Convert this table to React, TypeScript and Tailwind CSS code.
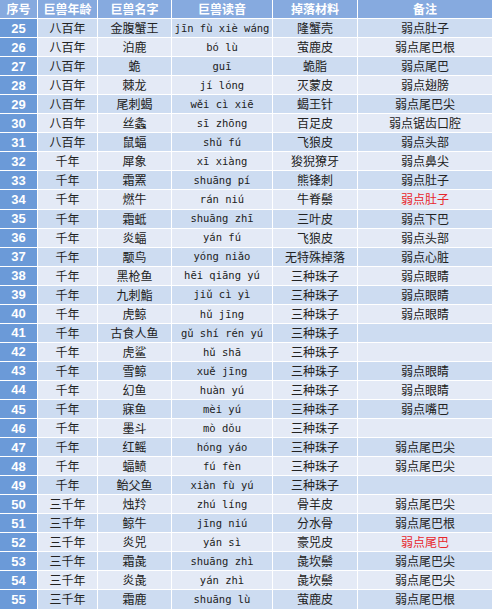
const rows: [number, string, string, string, string, string, boolean?][] = [
  [25, "八百年", "金腹蟹王", "jīn fù xiè wáng", "隆蟹壳", "弱点肚子"],
  [26, "八百年", "泊鹿", "bó lù", "萤鹿皮", "弱点尾巴根"],
  [27, "八百年", "蛫", "guī", "蛫脂", "弱点尾巴"],
  [28, "八百年", "棘龙", "jí lóng", "灭蒙皮", "弱点翅膀"],
  [29, "八百年", "尾刺蝎", "wěi cì xiē", "蝎王针", "弱点尾巴尖"],
  [30, "八百年", "丝螽", "sī zhōng", "百足皮", "弱点锯齿口腔"],
  [31, "八百年", "鼠蝠", "shǔ fú", "飞狼皮", "弱点头部"],
  [32, "千年", "犀象", "xī xiàng", "狻猊獠牙", "弱点鼻尖"],
  [33, "千年", "霜罴", "shuāng pí", "熊锋刺", "弱点肚子"],
  [34, "千年", "燃牛", "rán niú", "牛脊鬃", "弱点肚子", true],
  [35, "千年", "霜蚳", "shuāng zhī", "三叶皮", "弱点下巴"],
  [36, "千年", "炎蝠", "yán fú", "飞狼皮", "弱点头部"],
  [37, "千年", "颙鸟", "yóng niǎo", "无特殊掉落", "弱点心脏"],
  [38, "千年", "黑枪鱼", "hēi qiāng yú", "三种珠子", "弱点眼睛"],
  [39, "千年", "九刺鮨", "jiǔ cì yì", "三种珠子", "弱点眼睛"],
  [40, "千年", "虎鲸", "hǔ jīng", "三种珠子", "弱点眼睛"],
  [41, "千年", "古食人鱼", "gǔ shí rén yú", "三种珠子", ""],
  [42, "千年", "虎鲨", "hǔ shā", "三种珠子", ""],
  [43, "千年", "雪鲸", "xuě jīng", "三种珠子", "弱点眼睛"],
  [44, "千年", "幻鱼", "huàn yú", "三种珠子", "弱点眼睛"],
  [45, "千年", "寐鱼", "mèi yú", "三种珠子", "弱点嘴巴"],
  [46, "千年", "墨斗", "mò dǒu", "三种珠子", ""],
  [47, "千年", "红鳐", "hóng yáo", "三种珠子", "弱点尾巴尖"],
  [48, "千年", "蝠鲼", "fú fèn", "三种珠子", "弱点尾巴尖"],
  [49, "千年", "鲐父鱼", "xiàn fù yú", "三种珠子", ""],
  [50, "三千年", "烛羚", "zhú líng", "骨羊皮", "弱点尾巴尖"],
  [51, "三千年", "鲸牛", "jīng niú", "分水骨", "弱点尾巴根"],
  [52, "三千年", "炎兕", "yán sì", "豪兕皮", "弱点尾巴", true],
  [53, "三千年", "霜彘", "shuāng zhì", "彘坎鬃", "弱点尾巴尖"],
  [54, "三千年", "炎彘", "yán zhì", "彘坎鬃", "弱点尾巴尖"],
  [55, "三千年", "霜鹿", "shuāng lù", "萤鹿皮", "弱点尾巴根"],
];

const headers = ["序号", "巨兽年龄", "巨兽名字", "巨兽读音", "掉落材料", "备注"];

const cell = "flex items-center justify-center whitespace-nowrap";

export default function App() {
  return (
    <div className="w-[500px] h-[610px] bg-white overflow-hidden font-['Noto_Sans_CJK_SC',sans-serif] text-[12px] leading-none">
      <div className="w-[490px] grid grid-cols-[37px_59px_73px_100px_84px_134px] auto-rows-[18.06px] gap-px bg-white">
        {headers.map((h) => (
          <div key={h} className={`${cell} bg-[#86aadf] text-white font-bold`}>
            {h}
          </div>
        ))}
        {rows.map(([n, age, name, py, mat, note, red], i) => {
          const bg = i % 2 === 0 ? "bg-[#cddcf1]" : "bg-[#e4eaf6]";
          return [
            <div key={`${n}a`} className={`${cell} bg-[#6b9ad8] text-white font-bold font-['Liberation_Sans',sans-serif] text-[13px]`}>
              {n}
            </div>,
            <div key={`${n}b`} className={`${cell} ${bg} text-[#222]`}>{age}</div>,
            <div key={`${n}c`} className={`${cell} ${bg} text-[#222]`}>{name}</div>,
            <div key={`${n}d`} className={`${cell} ${bg} text-[#222] font-['DejaVu_Sans_Mono',monospace] text-[10.5px]`}>{py}</div>,
            <div key={`${n}e`} className={`${cell} ${bg} text-[#222]`}>{mat}</div>,
            <div key={`${n}f`} className={`${cell} ${bg} ${red ? "text-[#e8262b]" : "text-[#222]"}`}>{note}</div>,
          ];
        })}
      </div>
    </div>
  );
}
